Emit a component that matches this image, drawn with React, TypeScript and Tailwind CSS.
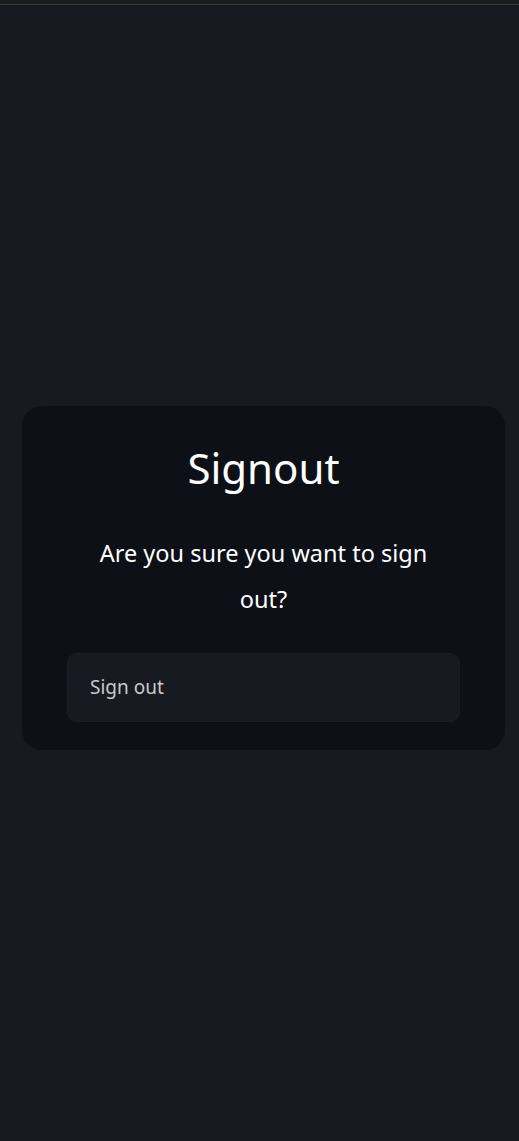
function SignoutCard() {
    const handleSignout = () => {
        console.log("signing out");
    };

    return (
        <div className="w-[483px] rounded-[20px] bg-[#0d1017] px-[45px] pt-[32px] pb-[28px] flex flex-col items-center">
            <h1 className="text-[42px] leading-[60px] text-white">Signout</h1>
            <p className="mt-[32px] max-w-[360px] text-center text-[23.5px] leading-[46px] text-white">
                Are you sure you want to sign out?
            </p>
            <button
                onClick={handleSignout}
                className="mt-[31px] w-full h-[69px] rounded-[10px] border border-[#1b1e25] bg-[#171a21] px-[22px] text-left text-[19px] text-[#c9cacc]"
            >
                Sign out
            </button>
        </div>
    );
}

export default function App() {
    return (
        <div className="min-h-screen flex flex-col bg-[#171a21]" style={{ fontFamily: '"Noto Sans", sans-serif' }}>
            <div className="h-[4px] bg-[#1c1c1d] border-b border-[#3b3b3c] box-content" />
            <div className="flex-1 flex items-center pt-[10px] pl-[22px] pr-[14px]">
                <SignoutCard />
            </div>
        </div>
    );
}
